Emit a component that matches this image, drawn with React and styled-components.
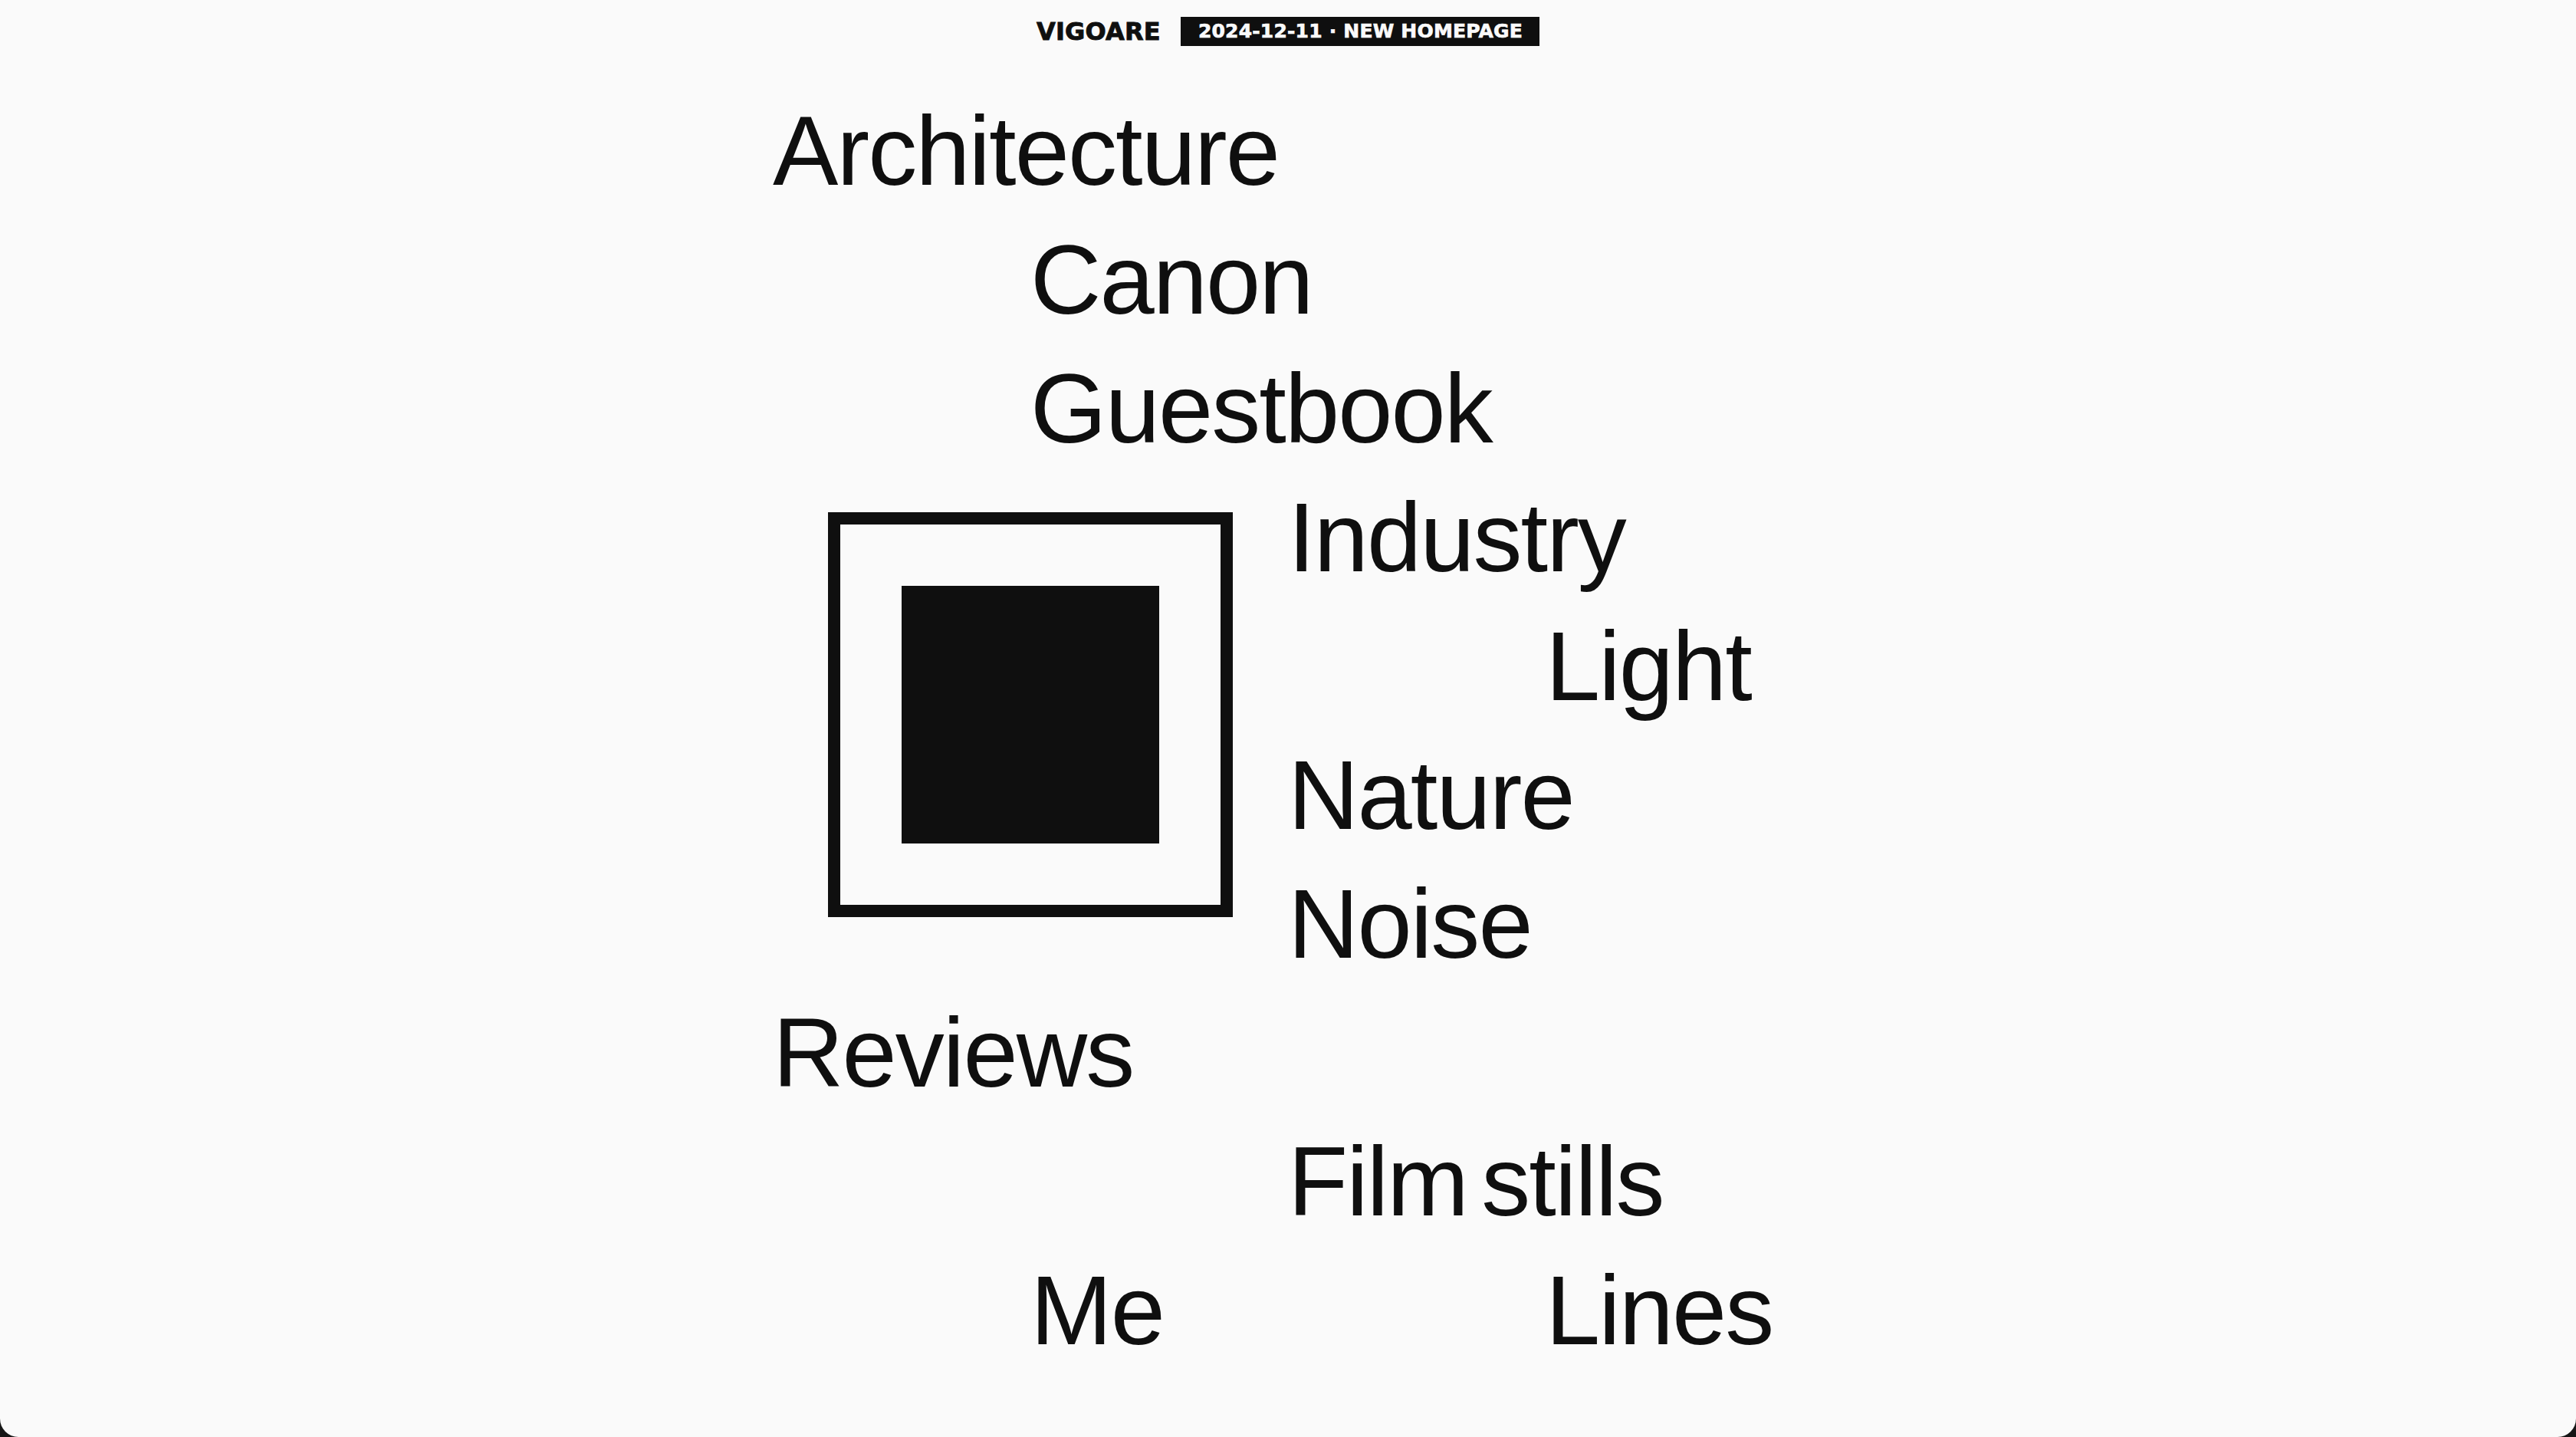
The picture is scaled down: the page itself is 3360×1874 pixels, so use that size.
import styled, { createGlobalStyle } from "styled-components";

const INK = '#0f0f0f';
const PAPER = '#fafafa';

const LINKS = [
    { text: 'Architecture', col: 1, row: 1 },
    { text: 'Canon', col: 2, row: 2 },
    { text: 'Guestbook', col: 2, row: 3 },
    { text: 'Industry', col: 3, row: 4 },
    { text: 'Light', col: 4, row: 5 },
    { text: 'Nature', col: 3, row: 6 },
    { text: 'Noise', col: 3, row: 7 },
    { text: 'Reviews', col: 1, row: 8 },
    { text: 'Film stills', col: 3, row: 9 },
    { text: 'Me', col: 2, row: 10 },
    { text: 'Lines', col: 4, row: 10 }
];

const GlobalStyle = createGlobalStyle`
  html, body {
    margin: 0;
    padding: 0;
    background: #161616;
  }
  #root {
    min-height: 100vh;
  }
`;

const Page = styled.div`
  min-height: 100vh;
  box-sizing: border-box;
  background: ${PAPER};
  border-radius: 0 0 24px 24px;
  padding-top: 22px;
  font-family: "Liberation Sans", Arial, sans-serif;
  color: ${INK};
`;

const Header = styled.header`
  display: flex;
  justify-content: center;
  align-items: center;
  gap: 26px;
  height: 38px;
`;

const Brand = styled.span`
  font-family: "DejaVu Sans", sans-serif;
  font-weight: 700;
  font-size: 32px;
  letter-spacing: 0.2px;
  -webkit-text-stroke: 0.9px ${INK};
  color: ${INK};
`;

const Badge = styled.span`
  font-family: "DejaVu Sans", sans-serif;
  font-weight: 700;
  font-size: 25px;
  letter-spacing: 0.2px;
  line-height: 38px;
  padding: 0 22px 0 23px;
  background: ${INK};
  color: ${PAPER};
  -webkit-text-stroke: 0.7px ${PAPER};
`;

const Index = styled.nav`
  display: grid;
  grid-template-columns: repeat(4, 336px);
  grid-auto-rows: 168px;
  width: 1344px;
  margin: 53px auto 0;
`;

const Item = styled.a`
  grid-column: ${({ $col }) => $col};
  grid-row: ${({ $row }) => $row};
  font-size: 128px;
  line-height: 168px;
  letter-spacing: -0.015em;
  word-spacing: -0.12em;
  white-space: nowrap;
  color: ${INK};
  text-decoration: none;
`;

const Frame = styled.div`
  grid-column: 1 / 3;
  grid-row: 4 / 8;
  justify-self: center;
  align-self: start;
  margin-top: 51px;
  width: 528px;
  height: 528px;
  box-sizing: border-box;
  border: 16px solid ${INK};
  display: flex;
  align-items: center;
  justify-content: center;
`;

const Block = styled.div`
  width: 336px;
  height: 336px;
  background: ${INK};
`;

const buildLink = ({ text, col, row }) => (
    <Item key={text.replace(/\s/, '-')} href="#" $col={col} $row={row}>
        {text}
    </Item>
);

export default () => (
  <>
    <GlobalStyle />
    <Page>
      <Header>
        <Brand>VIGOARE</Brand>
        <Badge>2024-12-11 · NEW HOMEPAGE</Badge>
      </Header>
      <Index>
        {LINKS.map(l => buildLink(l))}
        <Frame>
          <Block />
        </Frame>
      </Index>
    </Page>
  </>
);
